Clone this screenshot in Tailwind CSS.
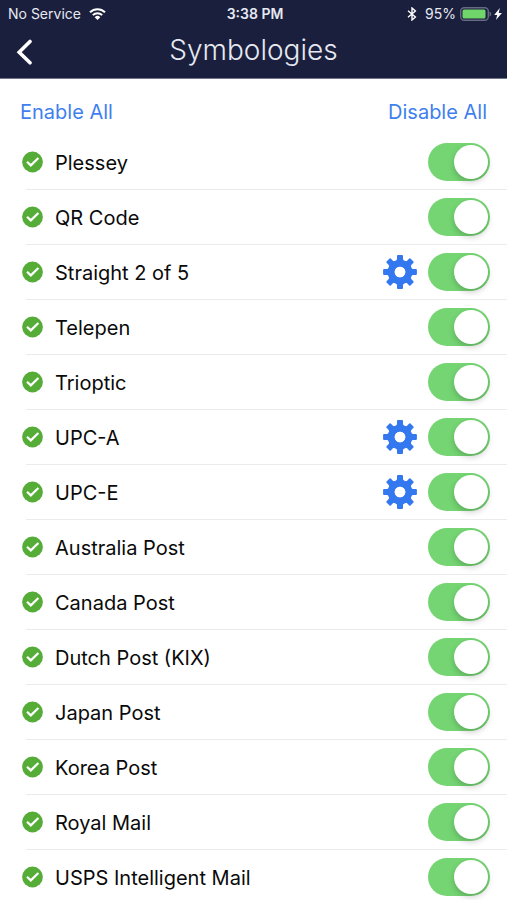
<!DOCTYPE html>
<html lang="en">
<head>
  <meta charset="UTF-8" />
  <meta name="viewport" content="width=device-width, initial-scale=1.0"/>
  <title>Symbologies</title>
  <script src="https://cdn.jsdelivr.net/npm/@tailwindcss/browser@4"></script>
</head>
<body class="h-screen overflow-hidden flex flex-col bg-white text-[#0a0a0a] font-['Inter','Liberation_Sans',sans-serif]">

  <!-- Icons -->
  <svg class="hidden">
    <symbol id="icon-check" viewBox="0 0 22 22">
      <circle cx="10.5" cy="11" r="10.4" fill="#55ad38"/>
      <path d="M5 10.800 8.800 14.400 16.400 7" fill="none" stroke="#fff" stroke-width="2.2"/>
    </symbol>
    <symbol id="icon-gear" viewBox="-17 -17 34 34">
      <g fill="#3478f0">
        <path id="tooth" d="M-4 -10.500 L-3 -13 V-16 Q-3 -16.900 -2.100 -16.900 H2.100 Q3 -16.900 3 -16 V-13 L4 -10.500Z"/>
        <use href="#tooth" transform="rotate(45)"/>
        <use href="#tooth" transform="rotate(90)"/>
        <use href="#tooth" transform="rotate(135)"/>
        <use href="#tooth" transform="rotate(180)"/>
        <use href="#tooth" transform="rotate(225)"/>
        <use href="#tooth" transform="rotate(270)"/>
        <use href="#tooth" transform="rotate(315)"/>
      </g>
      <circle r="8.8" fill="none" stroke="#3478f0" stroke-width="7"/>
      <circle r="5.3" fill="#fff"/>
    </symbol>
  </svg>

  <header class="shrink-0 h-[79px] bg-[#1a1f3d] text-[#e6e9f2] border-b border-[#70748c]">
    <!-- Status bar -->
    <div class="grid grid-cols-3 items-center h-7 pl-2 pr-[5px] text-sm">
      <div class="flex items-center gap-2 whitespace-nowrap">
        <span>No Service</span>
        <svg class="w-[17px] h-3" viewBox="0 0 17 12" fill="none" stroke="#fff" stroke-width="2">
          <path d="M1 4.3a10.6 10.6 0 0 1 15 0"/>
          <path d="M3.8 7.1a6.7 6.7 0 0 1 9.4 0"/>
          <path d="M8.500 12 5.700 9.200a4 4 0 0 1 5.600 0Z" fill="#fff" stroke="none"/>
        </svg>
      </div>
      <div class="text-center font-semibold">3:38 PM</div>
      <div class="flex items-center justify-end">
        <svg class="w-[10px] h-[14px] mr-2" viewBox="0 0 10 14" fill="none" stroke="#fff" stroke-width="1.4">
          <path d="M1 3.800 8.400 10 5 13V1L8.400 4 1 10.200"/>
        </svg>
        <span class="mr-1">95%</span>
        <svg class="w-8 h-[14px] mr-0.5" viewBox="0 0 32 14">
          <rect x="0.700" y="0.700" width="27.600" height="12.600" rx="3.500" fill="none" stroke="#666b82" stroke-width="1.4"/>
          <rect x="2.500" y="2.500" width="23" height="9" rx="1.500" fill="#70d66b"/>
          <path d="M29.500 4.500a2.600 2.600 0 0 1 0 5Z" fill="#666b82"/>
        </svg>
        <svg class="w-2 h-3" viewBox="0 0 8 12" fill="#fff">
          <path d="M5.800 0 0.200 7H3.200L2 12 7.900 4.900H4.700Z"/>
        </svg>
      </div>
    </div>

    <!-- Title bar -->
    <div class="grid grid-cols-[48px_1fr_48px] items-center h-11">
      <button type="button" aria-label="Back" class="pl-4">
        <svg class="w-4 h-7 mt-1" viewBox="0 0 16 28" fill="none" stroke="#fff" stroke-width="3.6" stroke-linecap="round" stroke-linejoin="miter">
          <path d="M14 3.500 3.200 14.200 14 24.800"/>
        </svg>
      </button>
      <h1 class="text-center text-[28px] leading-9 font-light">Symbologies</h1>
    </div>
  </header>

  <main class="flex-1 min-h-0 overflow-y-auto [scrollbar-width:none]">
    <div class="flex justify-between items-center h-14 pt-[10px] px-5 text-xl text-[#3f7fee]">
      <button type="button" onclick="setAll(true)">Enable All</button>
      <button type="button" onclick="setAll(false)">Disable All</button>
    </div>
    <ul id="list"></ul>
  </main>

<script>
  const symbologies = [
    { name: "Plessey" },
    { name: "QR Code" },
    { name: "Straight 2 of 5", settings: true },
    { name: "Telepen" },
    { name: "Trioptic" },
    { name: "UPC-A", settings: true },
    { name: "UPC-E", settings: true },
    { name: "Australia Post" },
    { name: "Canada Post" },
    { name: "Dutch Post (KIX)" },
    { name: "Japan Post" },
    { name: "Korea Post" },
    { name: "Royal Mail" },
    { name: "USPS Intelligent Mail" }
  ];

  const gear = (name) => `
    <button type="button" aria-label="${name} settings" class="mr-[11px]">
      <svg class="size-[34px]"><use href="#icon-gear"/></svg>
    </button>`;

  document.getElementById("list").innerHTML = symbologies.map((item, i) => `
    <li>
      <div class="flex items-center h-[54px] pl-[22px] pr-[17px]">
        <svg class="size-[22px] shrink-0"><use href="#icon-check"/></svg>
        <label for="sym-${i}" class="flex-1 pl-[11px] pt-0.5 text-xl">${item.name}</label>
        ${item.settings ? gear(item.name) : ""}
        <input id="sym-${i}" type="checkbox" checked
          class="appearance-none shrink-0 flex items-center w-[62px] h-[38px] p-0.5 rounded-full bg-gray-200 checked:bg-[#74d572] before:content-[''] before:size-[34px] before:rounded-full before:bg-white before:shadow-[0_3px_6px_rgba(0,0,0,0.2)] checked:before:ml-6">
      </div>
      <div class="ml-[26px] h-px bg-[#ebebeb]"></div>
    </li>`).join("");

  function setAll(on) {
    document.querySelectorAll("#list input").forEach((input) => input.checked = on);
  }
</script>

</body>
</html>
